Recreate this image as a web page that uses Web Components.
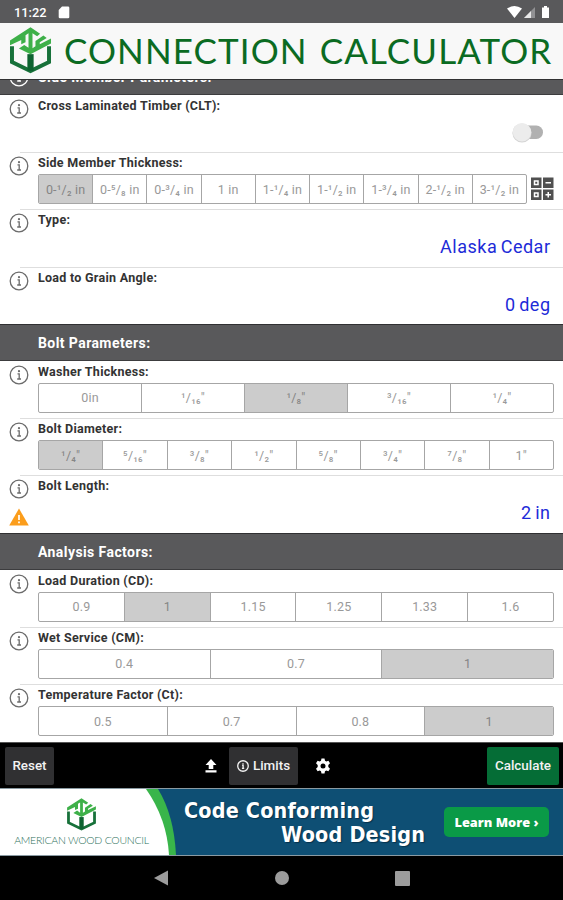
<!DOCTYPE html>
<html lang="en">
<head>
<meta charset="utf-8">
<title>Connection Calculator</title>
<style>
	body {
		margin: 0;
		width: 563px;
		height: 900px;
		overflow: hidden;
		background: #fff;
		font-family: Roboto, "Liberation Sans", sans-serif;
	}
</style>
</head>
<body>
<calc-app></calc-app>

<script>
// shared helper: open shadow root filled from a string
class BaseElement extends HTMLElement {
	constructor() {
		super();
		this.attachShadow({ mode: "open" });
	}
	connectedCallback() {
		this.shadowRoot.innerHTML = this.render();
	}
}

// awc-logo.js
class AwcLogo extends BaseElement {
	render() {
		return `
      <style>
        :host { display: block; }
        svg { display: block; width: 100%; height: 100%; }
      </style>
      <svg viewBox="10 8 130 142" fill="none">
        <path d="M19 66V114L75 141L131 114V66" stroke="#17713a" stroke-width="12"/>
        <path d="M75 90V141" stroke="#0d6330" stroke-width="19"/>
        <path d="M13 63V49L75 9L104 28L95 36L81 27V72L90 66V50L114 34L124 41L103 54V60L137 43V58L75 90L40 73L56 62L69 71V27L60 33V54L47 60V47Z" fill="#3eb049"/>
      </svg>
    `;
	}
}
customElements.define("awc-logo", AwcLogo);

// status-bar.js
class StatusBar extends BaseElement {
	render() {
		return `
      <style>
        :host {
          display: flex;
          align-items: center;
          height: 23px;
          box-sizing: border-box;
          padding: 2px 12px 0 14px;
          background: #59595b;
          color: #fff;
          font-size: 12.8px;
          font-weight: 500;
        }
        .time { width: 44px; }
        .right { margin-left: auto; display: flex; }
        svg { display: block; }
      </style>
      <span class="time">11:22</span>
      <svg width="12" height="13" viewBox="0 0 12 13"><path d="M4 .5H10Q11.300 .5 11.300 1.800V11Q11.300 12.300 10 12.300H2Q.7 12.300 .7 11V4Z" fill="#fff"/></svg>
      <div class="right">
        <svg width="44" height="13" viewBox="0 0 44 13">
          <path d="M0 2.500Q7.500 -2.500 15 2.500L7.500 12Z" fill="#fff"/>
          <path d="M17 12L28 1V12Z" fill="#919193"/>
          <path d="M17 12L24 5V12Z" fill="#e8e8e8"/>
          <path d="M35 1.500H37V0H40V1.500H42V12H35Z" fill="#fff"/>
        </svg>
      </div>
    `;
	}
}
customElements.define("status-bar", StatusBar);

// app-title.js
class AppTitle extends BaseElement {
	render() {
		return `
      <style>
        :host {
          display: flex;
          align-items: center;
          height: 57px;
          box-sizing: border-box;
          padding: 0 10px 2px 9px;
          background: #f8f8f8;
          border-bottom: 1px solid #303032;
        }
        awc-logo { width: 43px; height: 47px; flex: none; }
        h1 {
          margin: 0 0 0 12px;
          font: 400 35px/50px Lato, sans-serif;
          letter-spacing: 1.1px;
          word-spacing: 2px;
          color: #0b6b22;
          white-space: nowrap;
        }
      </style>
      <awc-logo></awc-logo>
      <h1><slot></slot></h1>
    `;
	}
}
customElements.define("app-title", AppTitle);

// section-header.js
class SectionHeader extends BaseElement {
	render() {
		return `
      <style>
        :host {
          display: flex;
          align-items: center;
          height: 37.2px;
          box-sizing: border-box;
          padding: 2px 0 0 9px;
          background: #59595b;
          border-top: 1px solid #303032;
          border-bottom: 1px solid #3c3c3e;
          color: #fff;
          font-size: 14px;
          font-weight: 700;
          letter-spacing: .42px;
        }
        .icon { width: 29px; height: 20px; }
      </style>
      <div class="icon">${this.hasAttribute("info") ? '<info-icon></info-icon>' : ""}</div>
      <slot></slot>
    `;
	}
}
customElements.define("section-header", SectionHeader);

// info-icon.js
class InfoIcon extends BaseElement {
	render() {
		return `
      <style>
        :host { display: block; width: 20px; height: 20px; }
        svg { display: block; width: 100%; height: 100%; }
        g { stroke-width: var(--icon-stroke, 1.3); }
      </style>
      <svg viewBox="0 0 20 20">
        <g fill="none" stroke="currentColor">
          <circle cx="10" cy="10" r="8.800"/>
          <path d="M8.500 8.800H10.200V14M8.200 14H12"/>
        </g>
        <circle cx="10" cy="6.200" r="1.100" fill="currentColor"/>
      </svg>
    `;
	}
}
customElements.define("info-icon", InfoIcon);

// param-row.js
class ParamRow extends BaseElement {
	render() {
		const warn = this.hasAttribute("warning") ? `
      <svg class="warn" width="20" height="18" viewBox="0 0 20 18">
        <path d="M10 .5L19.800 17.500H.2Z" fill="#fb9d1c"/>
        <path d="M10 7V12M10 13.500V15.300" stroke="#fff" stroke-width="1.700"/>
      </svg>` : "";
		return `
      <style>
        :host {
          display: flex;
          height: 57.2px;
          box-sizing: border-box;
          background: #fff;
        }
        .side {
          display: flex;
          flex-direction: column;
          width: 20px;
          padding: 4px 0 0 9px;
          color: #6b6b6b;
        }
        .warn { display: block; margin-top: 9px; }
        .main {
          flex: 1;
          display: flex;
          flex-direction: column;
          padding: 3px 9px 0 9px;
        }
        .label {
          height: 19px;
          font-size: 12.5px;
          line-height: 15px;
          font-weight: 700;
          letter-spacing: .27px;
          color: #333;
        }
        /* divider starts under the middle of the icon */
        :host([line]) {
          background: linear-gradient(#dedede, #dedede) 20px 0 / 100% 1px no-repeat #fff;
        }
      </style>
      <div class="side"><info-icon></info-icon>${warn}</div>
      <div class="main">
        <div class="label">${this.getAttribute("label")}</div>
        <slot></slot>
      </div>
    `;
	}
}
customElements.define("param-row", ParamRow);

// segment-group.js
class SegmentGroup extends BaseElement {
	render() {
		const selected = Number(this.getAttribute("selected"));
		const items = this.getAttribute("items").split("|");
		return `
      <style>
        :host {
          display: flex;
          height: 30px;
          box-sizing: border-box;
          border: 1px solid #a6a6a6;
          border-radius: 2px;
          overflow: hidden;
          color: #999;
          font-size: 12.5px;
          letter-spacing: .2px;
        }
        .item {
          flex: 1 1 0;
          display: flex;
          align-items: center;
          justify-content: center;
          white-space: pre;
        }
        .item + .item { border-left: 1px solid #a6a6a6; }
        .on { background: #ccc; color: #858585; }
      </style>
      ${items.map((t, i) => `<div class="item${i === selected ? " on" : ""}">${t}</div>`).join("")}
    `;
	}
}
customElements.define("segment-group", SegmentGroup);

// keypad-field.js, segments plus keypad button
class KeypadField extends BaseElement {
	render() {
		return `
      <style>
        :host { display: flex; align-items: center; gap: 4px; }
        ::slotted(segment-group) { flex: 1; }
        svg { display: block; flex: none; }
      </style>
      <slot></slot>
      <svg width="23" height="24" viewBox="0 0 23 24">
        <g fill="#505050"><path d="M0 .5H10.500V11H0ZM12 .5H22.500V11H12ZM0 12.500H10.500V23H0ZM12 12.500H22.500V23H12Z"/></g>
        <g fill="none" stroke="#fff" stroke-width="1.500">
          <path d="M3.500 4H7V7.500H3.500ZM14.500 5.800H20M3.500 16H7V19.500H3.500ZM14.500 17.800H20M17.250 15V20.500"/>
        </g>
      </svg>
    `;
	}
}
customElements.define("keypad-field", KeypadField);

// toggle-switch.js
class ToggleSwitch extends BaseElement {
	render() {
		return `
      <style>
        :host {
          display: block;
          align-self: flex-end;
          margin: 4px 10px 0 0;
        }
        svg { display: block; }
      </style>
      <svg width="32" height="24" viewBox="0 0 32 24">
        <rect x="6" y="4.500" width="25" height="13.500" rx="6.700" fill="#b1b1b1"/>
        <circle cx="10" cy="12" r="9.600" fill="#d4d4d4"/>
        <circle cx="10" cy="11.200" r="9.200" fill="#ececec"/>
      </svg>
    `;
	}
}
customElements.define("toggle-switch", ToggleSwitch);

// value-link.js
class ValueLink extends BaseElement {
	render() {
		return `
      <style>
        :host {
          display: block;
          align-self: flex-end;
          margin: 4px 3.5px 0 0;
          color: #1d2bd8;
          font-size: 18px;
          line-height: 24px;
          letter-spacing: .5px;
          word-spacing: -1.5px;
        }
      </style>
      <slot></slot>
    `;
	}
}
customElements.define("value-link", ValueLink);

// tool-bar.js
class ToolBar extends BaseElement {
	render() {
		return `
      <style>
        :host {
          display: flex;
          align-items: center;
          height: 46px;
          box-sizing: border-box;
          padding: 0 4px 0 5px;
          background: #000;
          border-top: 1px solid #555;
          color: #f2f2f2;
          font-size: 13.4px;
          font-weight: 500;
        }
        .btn {
          display: flex;
          align-items: center;
          justify-content: center;
          gap: 4px;
          height: 38px;
          border-radius: 2px;
          background: #303032;
        }
        .reset { width: 49px; }
        .limits { width: 69px; }
        .calc { width: 72px; margin-left: auto; background: #056d36; }
        .up { margin: 0 12px 0 151px; }
        .gear { margin-left: 17px; }
        svg { display: block; }
        info-icon { width: 12px; height: 12px; --icon-stroke: 2.2; }
      </style>
      <div class="btn reset">Reset</div>
      <svg class="up" width="12" height="14" viewBox="0 0 12 14"><path d="M6 0L11.500 6H8.300V10H3.700V6H.5ZM.5 11.300H11.500V13.500H.5Z" fill="#fff"/></svg>
      <div class="btn limits"><info-icon></info-icon><span>Limits</span></div>
      <svg class="gear" width="16" height="16" viewBox="0 0 16 16">
        <path d="M6.500 .5H9.500L10 2.700L11.300 3.400L13.400 2.700L15 5.300L13.300 6.900V9.100L15 10.700L13.400 13.300L11.300 12.600L10 13.300L9.500 15.500H6.500L6 13.300L4.700 12.600L2.600 13.300L1 10.700L2.700 9.100V6.900L1 5.300L2.600 2.700L4.700 3.400L6 2.700Z" fill="#fff"/>
        <circle cx="8" cy="8" r="2.500" fill="#000"/>
      </svg>
      <div class="btn calc">Calculate</div>
    `;
	}
}
customElements.define("tool-bar", ToolBar);

// ad-banner.js
class AdBanner extends BaseElement {
	render() {
		return `
      <style>
        :host {
          display: grid;
          grid-template-columns: 178px 1fr 119px;
          height: 68px;
          box-sizing: border-box;
          border-top: 1px solid #8a9aa2;
          border-bottom: 1px solid #8a9aa2;
          background: #0e4f74;
          color: #fff;
        }
        .brand {
          display: grid;
          grid-template: 66px / 178px;
        }
        .brand > * { grid-area: 1 / 1; }
        .mark {
          display: flex;
          flex-direction: column;
          align-items: center;
          width: 163px;
          padding-top: 9px;
        }
        awc-logo { width: 31px; height: 33px; }
        .name {
          margin-top: 3px;
          font: 300 10.5px/13px Lato, sans-serif;
          letter-spacing: -.27px;
          color: #2c6f5b;
          white-space: nowrap;
        }
        .copy {
          padding: 10px 0 0 6px;
          font: 700 21.4px/23.5px "DejaVu Sans Condensed", "DejaVu Sans", sans-serif;
          font-stretch: condensed;
          letter-spacing: .2px;
          text-shadow: 1px 1px 1px #06324d;
          white-space: nowrap;
        }
        .second { padding-left: 97px; }
        .more {
          align-self: center;
          width: 105px;
          height: 30px;
          border-radius: 5px;
          background: #0a9a47;
          font: 800 12.8px/30px "Open Sans", sans-serif;
          text-align: center;
        }
      </style>
      <div class="brand">
        <svg width="178" height="66" viewBox="0 0 178 66">
          <path d="M0 0H158Q174 26 176 66H0Z" fill="#39b54a"/>
          <path d="M0 0H146Q167 30 169 66H0Z" fill="#fff"/>
        </svg>
        <div class="mark">
          <awc-logo></awc-logo>
          <div class="name">AMERICAN WOOD COUNCIL</div>
        </div>
      </div>
      <div class="copy">
        <div class="first">Code Conforming</div>
        <div class="second">Wood Design</div>
      </div>
      <div class="more">Learn More ›</div>
    `;
	}
}
customElements.define("ad-banner", AdBanner);

// nav-bar.js
class NavBar extends BaseElement {
	render() {
		return `
      <style>
        :host {
          display: flex;
          justify-content: center;
          align-items: center;
          gap: 106px;
          height: 44px;
          background: #000;
        }
        svg { display: block; }
      </style>
      <svg width="15" height="16"><path d="M0 8L14 .5V15.500Z" fill="#9c9c9c"/></svg>
      <svg width="14" height="14"><circle cx="7" cy="7" r="7" fill="#9c9c9c"/></svg>
      <svg width="15" height="15"><rect width="15" height="15" rx="1" fill="#9c9c9c"/></svg>
    `;
	}
}
customElements.define("nav-bar", NavBar);

// calc-app.js
class CalcApp extends BaseElement {
	render() {
		return `
      <style>
        :host {
          display: flex;
          flex-direction: column;
          height: 900px;
        }
        .list { height: 662px; overflow: hidden; }
        /* list is scrolled part way past its first header */
        .scrolled { margin-top: -22.2px; }
      </style>
      <status-bar></status-bar>
      <app-title>CONNECTION CALCULATOR</app-title>
      <div class="list">
        <div class="scrolled">
          <section-header info>Side Member Parameters:</section-header>
          <param-row label="Cross Laminated Timber (CLT):"><toggle-switch></toggle-switch></param-row>
          <param-row line label="Side Member Thickness:">
            <keypad-field><segment-group selected="0" items="0-¹/₂ in|0-⁵/₈ in|0-³/₄ in|1 in|1-¹/₄ in|1-¹/₂ in|1-³/₄ in|2-¹/₂ in|3-¹/₂ in"></segment-group></keypad-field>
          </param-row>
          <param-row line label="Type:"><value-link>Alaska Cedar</value-link></param-row>
          <param-row line label="Load to Grain Angle:"><value-link>0 deg</value-link></param-row>
          <section-header>Bolt Parameters:</section-header>
          <param-row label="Washer Thickness:"><segment-group selected="2" items="0in|¹/₁₆&quot;|¹/₈&quot;|³/₁₆&quot;|¹/₄&quot;"></segment-group></param-row>
          <param-row line label="Bolt Diameter:"><segment-group selected="0" items="¹/₄&quot;|⁵/₁₆&quot;|³/₈&quot;|¹/₂&quot;|⁵/₈&quot;|³/₄&quot;|⁷/₈&quot;|1&quot;"></segment-group></param-row>
          <param-row line warning label="Bolt Length:"><value-link>2 in</value-link></param-row>
          <section-header>Analysis Factors:</section-header>
          <param-row label="Load Duration (CD):"><segment-group selected="1" items="0.9|1|1.15|1.25|1.33|1.6"></segment-group></param-row>
          <param-row line label="Wet Service (CM):"><segment-group selected="2" items="0.4|0.7|1"></segment-group></param-row>
          <param-row line label="Temperature Factor (Ct):"><segment-group selected="3" items="0.5|0.7|0.8|1"></segment-group></param-row>
        </div>
      </div>
      <tool-bar></tool-bar>
      <ad-banner></ad-banner>
      <nav-bar></nav-bar>
    `;
	}
}
customElements.define("calc-app", CalcApp);
</script>
</body>
</html>
